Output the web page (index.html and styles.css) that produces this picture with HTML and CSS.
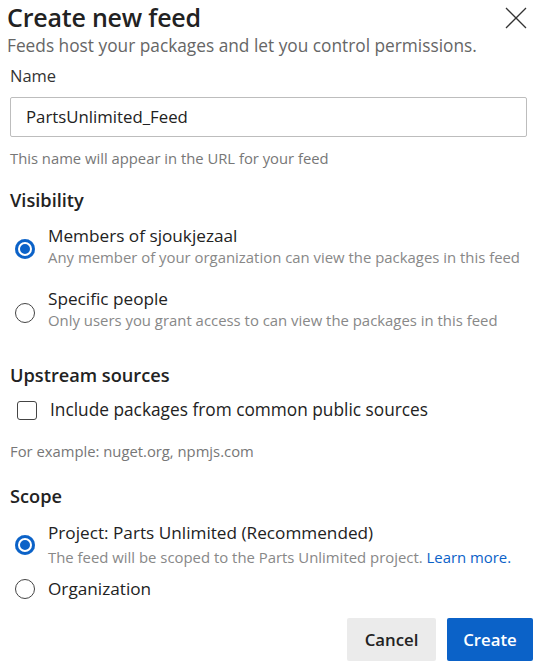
FILE: index.html
```html
<!DOCTYPE html>
<html lang="en">
<head>
<meta charset="utf-8">
<title>Create new feed</title>
<link rel="stylesheet" href="styles.css">
</head>
<body>
<div class="dialog">
  <header class="head">
    <div class="head-text">
      <h1 class="title">Create new feed</h1>
      <p class="subtitle">Feeds host your packages and let you control permissions.</p>
    </div>
    <button class="close" aria-label="Close">
      <svg width="22" height="22" viewBox="0 0 22 22"><path d="M1 1 L21 21 M21 1 L1 21" stroke="#333" stroke-width="1.3" fill="none"/></svg>
    </button>
  </header>

  <section class="field">
    <div class="label">Name</div>
    <div class="input">PartsUnlimited_Feed</div>
    <p class="hint hint-name">This name will appear in the URL for your feed</p>
  </section>

  <section class="group group-vis">
    <h2 class="group-title">Visibility</h2>
    <div class="option opt-members">
      <span class="radio checked"></span>
      <div class="opt-text">
        <div class="opt-title">Members of sjoukjezaal</div>
        <div class="opt-desc">Any member of your organization can view the packages in this feed</div>
      </div>
    </div>
    <div class="option opt-specific">
      <span class="radio"></span>
      <div class="opt-text">
        <div class="opt-title">Specific people</div>
        <div class="opt-desc">Only users you grant access to can view the packages in this feed</div>
      </div>
    </div>
  </section>

  <section class="group group-up">
    <h2 class="group-title">Upstream sources</h2>
    <div class="check-row">
      <span class="checkbox"></span>
      <span class="check-label">Include packages from common public sources</span>
    </div>
    <p class="hint hint-up">For example: nuget.org, npmjs.com</p>
  </section>

  <section class="group group-scope">
    <h2 class="group-title">Scope</h2>
    <div class="option opt-project">
      <span class="radio checked"></span>
      <div class="opt-text">
        <div class="opt-title">Project: Parts Unlimited (Recommended)</div>
        <div class="opt-desc">The feed will be scoped to the Parts Unlimited project. <a class="link" href="#">Learn more.</a></div>
      </div>
    </div>
    <div class="option opt-org">
      <span class="radio"></span>
      <div class="opt-text">
        <div class="opt-title">Organization</div>
      </div>
    </div>
  </section>

  <footer class="actions">
    <button class="btn btn-cancel">Cancel</button>
    <button class="btn btn-create">Create</button>
  </footer>
</div>
</body>
</html>
```

FILE: styles.css
```css
* { box-sizing: border-box; }
html, body { margin: 0; padding: 0; background: #fff; }
body {
  font-family: "Open Sans", "Noto Sans", sans-serif;
  color: #333;
}
.dialog {
  width: 544px;
  padding: 0 17px 0 10px;
}
.head {
  display: flex;
  justify-content: space-between;
  align-items: flex-start;
  margin-left: -3px;
}
.title {
  margin: 0;
  font-size: 25px;
  font-weight: 600;
  line-height: 34px;
  color: #222;
  letter-spacing: -0.2px;
}
.subtitle {
  margin: 0;
  font-size: 17.3px;
  line-height: 24px;
  color: #666;
}
.close {
  border: 0;
  background: none;
  padding: 0;
  margin: 7px 0 0 0;
  width: 22px;
  height: 22px;
  display: block;
}
.close svg { display: block; }

.field { margin-top: 6px; }
.label {
  font-size: 16.5px;
  line-height: 24px;
  color: #333;
}
.input {
  margin-top: 9px;
  height: 40px;
  border: 1px solid #bdbdbd;
  border-radius: 2px;
  padding: 0 15px;
  font-size: 16.8px;
  line-height: 38px;
  color: #222;
}
.hint {
  margin: 0;
  font-size: 14.8px;
  line-height: 20px;
  color: #777;
}
.hint-name { margin-top: 11px; }

.group-title {
  margin: 0;
  font-size: 18.2px;
  font-weight: 600;
  line-height: 24px;
  color: #222;
}
.group-vis { margin-top: 20px; }
.group-up { margin-top: 33px; }
.group-scope { margin-top: 23px; }

.option {
  display: flex;
  align-items: center;
  padding-left: 5px;
}
.radio {
  flex: 0 0 20px;
  width: 20px;
  height: 20px;
  border-radius: 50%;
  border: 1.6px solid #444;
  margin-right: 13px;
}
.radio.checked {
  border: 0;
  background: #0b62c8;
  box-shadow: inset 0 0 0 3px #0b62c8, inset 0 0 0 5px #fff;
}
.opt-title {
  font-size: 17.2px;
  line-height: 22px;
  color: #222;
}
.opt-desc {
  font-size: 14.9px;
  line-height: 20px;
  color: #888;
}
.link { color: #0b62c8; text-decoration: none; }

.opt-members { margin-top: 13px; }
.opt-members .radio { margin-top: 6px; }
.opt-specific { margin-top: 21px; }
.opt-specific .radio { margin-top: 7px; }
.opt-project { margin-top: 14px; }
.opt-project .opt-desc { margin-top: 3px; }
.opt-org { margin-top: 10px; }
.opt-org .opt-title { line-height: 24px; }

.check-row {
  display: flex;
  align-items: center;
  margin-top: 11px;
  padding-left: 7px;
  height: 24px;
}
.checkbox {
  width: 20px;
  height: 19px;
  border: 1.5px solid #444;
  border-radius: 3px;
  margin-right: 13px;
}
.check-label {
  font-size: 17.3px;
  line-height: 24px;
  color: #222;
}
.hint-up { margin-top: 19px; }

.actions {
  display: flex;
  justify-content: flex-end;
  gap: 11px;
  margin-top: 17px;
  margin-right: -6px;
}
.btn {
  border: 0;
  border-radius: 2px;
  height: 43px;
  font-family: "Open Sans", "Noto Sans", sans-serif;
  font-size: 16.8px;
  font-weight: 600;
  padding: 0;
}
.btn-cancel { width: 89px; background: #ebebeb; color: #222; }
.btn-create { width: 86px; background: #0b62c8; color: #fff; }
```
